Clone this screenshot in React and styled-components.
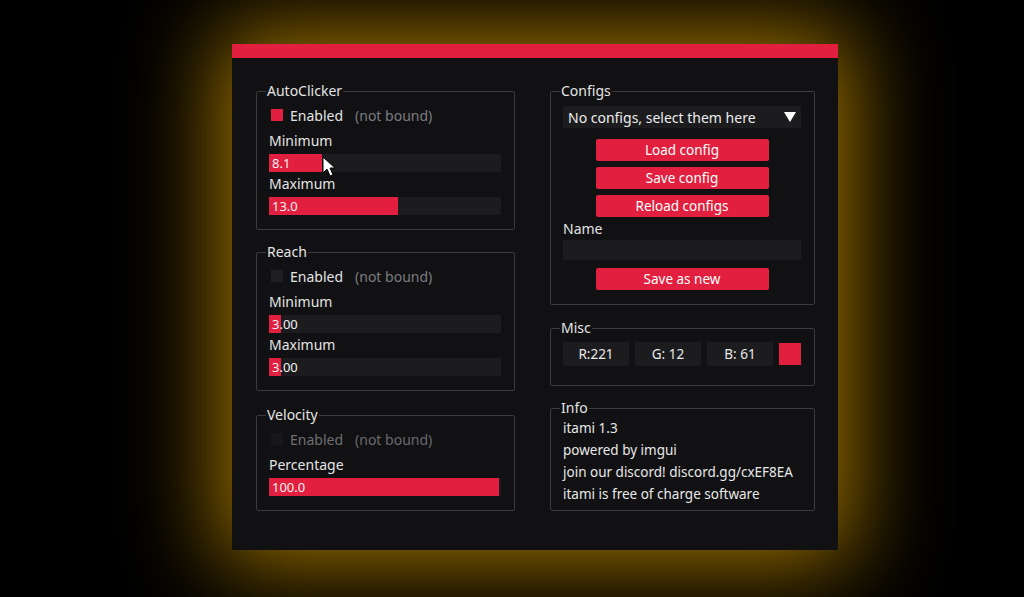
import React from 'react';
import styled, { createGlobalStyle } from 'styled-components';

const RED = '#e21f3e';

const GlobalStyle = createGlobalStyle`
  html, body {
    margin: 0;
    padding: 0;
    background: #000;
    width: 1024px;
    height: 597px;
    overflow: hidden;
  }
  body {
    font-family: "Noto Sans", "Open Sans", sans-serif;
    color: #e4e4e4;
  }
`;

const Page = styled.div`
  width: 1024px;
  height: 597px;
  padding: 44px 0 0 232px;
  box-sizing: border-box;
`;

const Window = styled.div`
  position: relative;
  width: 606px;
  height: 506px;
  background: #111113;
  box-shadow: 0 0 85px 14px rgb(160, 116, 0);
  display: flex;
  flex-direction: column;
`;

const TitleBar = styled.div`
  height: 14px;
  background: ${RED};
  flex-shrink: 0;
`;

const Body = styled.div`
  display: flex;
  gap: 35px;
  padding: 24px 23px 0 24px;
`;

const Column = styled.div`
  width: ${(p) => p.$w}px;
  display: flex;
  flex-direction: column;
  gap: 13px;
`;

const Group = styled.fieldset`
  margin: ${(p) => p.$mt || 0}px 0 0 0;
  min-width: 0;
  border: 1px solid #3b3b3e;
  border-radius: 2px;
  padding: ${(p) => p.$pad || '6px 13px 14px 12px'};
  display: flex;
  flex-direction: column;
`;

const Legend = styled.legend`
  margin-left: -3px;
  padding: 0 1px;
  font-size: 14px;
  line-height: 18px;
  color: #e4e4e4;
`;

const CheckRow = styled.div`
  display: flex;
  align-items: center;
  height: 18px;
  padding-left: 2px;
  font-size: 14px;
  color: ${(p) => (p.$disabled ? '#6f6f72' : '#e4e4e4')};
`;

const Box = styled.span`
  width: 12px;
  height: 12px;
  margin-right: 7px;
  background: ${(p) => (p.$on ? RED : p.$disabled ? '#18181a' : '#1f1f22')};
`;

const Hint = styled.span`
  margin-left: 12px;
  color: ${(p) => (p.$disabled ? '#6a6a6d' : '#7c7c80')};
`;

const Label = styled.div`
  height: 18px;
  line-height: 18px;
  font-size: 14px;
  margin-top: ${(p) => p.$mt || 0}px;
`;

const Track = styled.div`
  position: relative;
  height: 18px;
  margin-top: 4px;
  background: #1c1c1f;
  display: flex;
  align-items: center;
`;

const Fill = styled.div`
  position: absolute;
  left: 0;
  top: 0;
  bottom: 0;
  background: ${RED};
`;

const Value = styled.span`
  position: relative;
  padding-left: 3px;
  font-size: 13px;
  color: #f2f2f2;
`;

const Cursor = styled.svg`
  position: absolute;
  left: 53px;
  top: 2px;
  width: 14px;
  height: 21px;
`;

const Dropdown = styled.div`
  height: 22px;
  background: #1c1c1f;
  display: flex;
  align-items: center;
  justify-content: space-between;
  padding: 0 5px;
  font-size: 14px;
  color: #ececec;
`;

const Button = styled.div`
  align-self: center;
  width: 173px;
  height: 22px;
  margin-top: ${(p) => p.$mt || 6}px;
  background: ${RED};
  border-radius: 2px;
  display: flex;
  align-items: center;
  justify-content: center;
  font-size: 13.5px;
  color: #fff;
`;

const Input = styled.div`
  height: 20px;
  margin-top: 2px;
  background: #1c1c1f;
`;

const ColorRow = styled.div`
  display: flex;
  align-items: center;
  gap: 6px;
`;

const Channel = styled.div`
  flex: 1;
  height: 24px;
  background: #1c1c1f;
  display: flex;
  align-items: center;
  justify-content: center;
  font-size: 13.5px;
  color: #e8e8e8;
`;

const Swatch = styled.div`
  width: 22px;
  height: 22px;
  background: ${RED};
`;

const InfoLine = styled.div`
  height: 22px;
  line-height: 22px;
  font-size: 13.5px;
  color: #e8e8e8;
`;

function Slider({ value, pct, cursor }) {
  return (
    <Track>
      <Fill style={{ width: `${pct}%` }} />
      <Value>{value}</Value>
      {cursor && (
        <Cursor viewBox="0 0 14 21">
          <path d="M1 1 L1 17 L5 13 L8 20 L11 18.7 L8 12 L13 12 Z" fill="#fff" stroke="#000" strokeWidth="1" />
        </Cursor>
      )}
    </Track>
  );
}

function Check({ on, disabled }) {
  return (
    <CheckRow $disabled={disabled}>
      <Box $on={on} $disabled={disabled} />
      Enabled
      <Hint $disabled={disabled}>(not bound)</Hint>
    </CheckRow>
  );
}

export default function App() {
  return (
    <>
      <GlobalStyle />
      <Page>
        <Window>
          <TitleBar />
          <Body>
            <Column $w={259}>
              <Group>
                <Legend>AutoClicker</Legend>
                <Check on />
                <Label $mt={8}>Minimum</Label>
                <Slider value="8.1" pct={23} cursor />
                <Label $mt={3}>Maximum</Label>
                <Slider value="13.0" pct={55.6} />
              </Group>
              <Group>
                <Legend>Reach</Legend>
                <Check />
                <Label $mt={8}>Minimum</Label>
                <Slider value="3.00" pct={5} />
                <Label $mt={3}>Maximum</Label>
                <Slider value="3.00" pct={5} />
              </Group>
              <Group $mt={2}>
                <Legend>Velocity</Legend>
                <Check disabled />
                <Label $mt={8}>Percentage</Label>
                <Slider value="100.0" pct={99} />
              </Group>
            </Column>
            <Column $w={265}>
              <Group>
                <Legend>Configs</Legend>
                <Dropdown>
                  No configs, select them here
                  <svg width="12" height="10" viewBox="0 0 12 10">
                    <path d="M0 0 H12 L6 10 Z" fill="#fff" />
                  </svg>
                </Dropdown>
                <Button $mt={11}>Load config</Button>
                <Button>Save config</Button>
                <Button>Reload configs</Button>
                <Label $mt={3}>Name</Label>
                <Input />
                <Button $mt={8}>Save as new</Button>
              </Group>
              <Group $pad="5px 13px 19px 12px" $mt={1}>
                <Legend>Misc</Legend>
                <ColorRow>
                  <Channel>R:221</Channel>
                  <Channel>G: 12</Channel>
                  <Channel>B: 61</Channel>
                  <Swatch />
                </ColorRow>
              </Group>
              <Group $pad="0 13px 5px 12px">
                <Legend>Info</Legend>
                <InfoLine>itami 1.3</InfoLine>
                <InfoLine>powered by imgui</InfoLine>
                <InfoLine>join our discord! discord.gg/cxEF8EA</InfoLine>
                <InfoLine>itami is free of charge software</InfoLine>
              </Group>
            </Column>
          </Body>
        </Window>
      </Page>
    </>
  );
}
